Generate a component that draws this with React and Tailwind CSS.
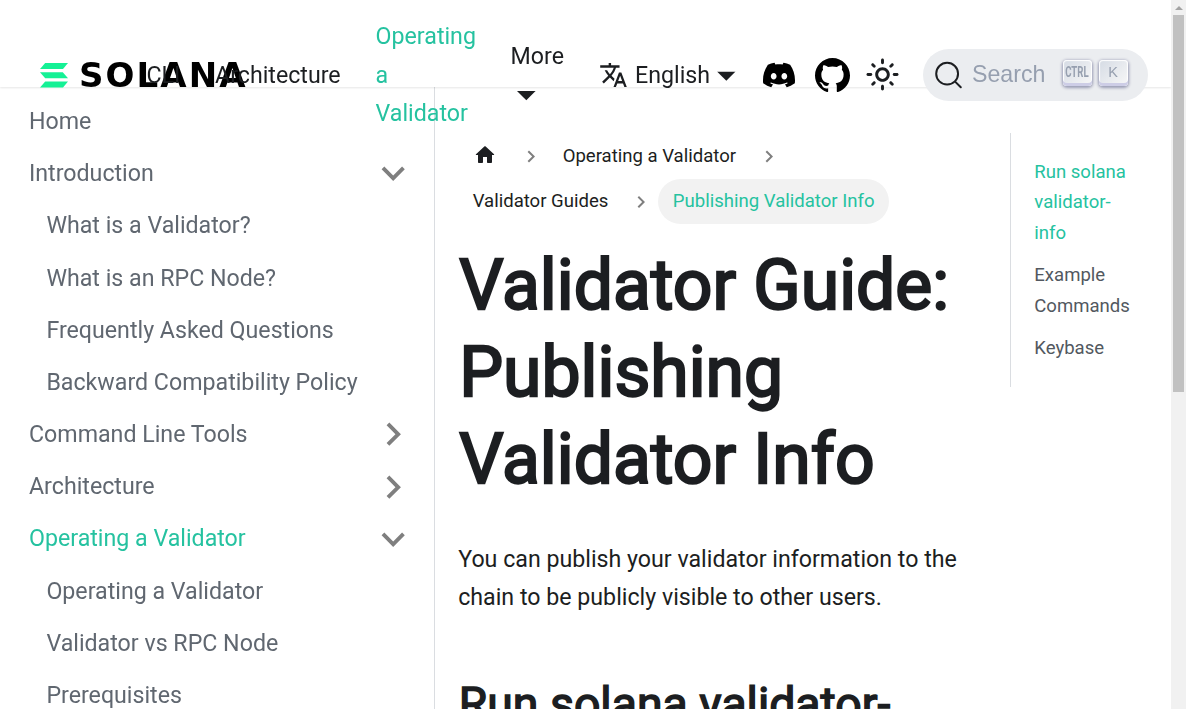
import { SiDiscord, SiGithub } from "react-icons/si";

const sidebar = [
  { label: "Home" },
  { label: "Introduction", state: "open" },
  { label: "What is a Validator?", nested: true },
  { label: "What is an RPC Node?", nested: true },
  { label: "Frequently Asked Questions", nested: true },
  { label: "Backward Compatibility Policy", nested: true },
  { label: "Command Line Tools", state: "closed" },
  { label: "Architecture", state: "closed" },
  { label: "Operating a Validator", state: "open", active: true },
  { label: "Operating a Validator", nested: true },
  { label: "Validator vs RPC Node", nested: true },
  { label: "Prerequisites", nested: true },
];

function Caret({ className }) {
  return (
    <svg viewBox="0 0 18 9" className={"h-[9.3px] w-[18.6px] " + className} fill="#1c1e21">
      <path d="M0 0h18L9 9z" />
    </svg>
  );
}

function Chevron({ className }) {
  return (
    <svg viewBox="0 0 24 24" className={className}>
      <path fill="#000" fillOpacity="0.5" d="M7.41 15.41 12 10.83l4.59 4.58L18 14l-6-6-6 6z" />
    </svg>
  );
}

function Logo() {
  return (
    <div className="flex h-[26px] w-[107.5px] shrink-0 items-center overflow-visible">
      <svg viewBox="0 0 28 25" className="h-[25px] w-7 shrink-0" fill="#14f195">
        <path d="M5.2 0H28l-5 6H0z" />
        <path d="M0 9.2h22.8l5.2 6H5.2z" />
        <path d="M5.2 18.4H28l-5 6H0z" />
      </svg>
      <span className="ml-[11px] whitespace-nowrap font-['DejaVu_Sans'] text-[34px] font-bold leading-[26px] tracking-[2.1px] text-black">
        SOLANA
      </span>
    </div>
  );
}

function Header() {
  return (
    <header className="relative z-10 h-[87px] shadow-[0_1px_2px_0_rgba(0,0,0,0.1)] will-change-transform">
      <div className="flex h-[150px] items-center pl-10 pr-[23px] text-[23.2px] leading-[38.28px]">
        <Logo />
        <span className="w-[37px] shrink-0 -translate-x-px">CLI</span>
        <span className="ml-[30.5px] w-[125px] shrink-0">Architecture</span>
        <span className="mb-[0.6px] ml-[35.6px] w-[100px] shrink-0 leading-[38.4px] text-[#25c2a0]">
          Operating a Validator
        </span>
        <div className="ml-[35px] w-[54px] shrink-0">
          <div>More</div>
          <div className="flex h-[38px] items-center pl-[6.4px]">
            <Caret className="translate-y-[2px]" />
          </div>
        </div>
        <div className="ml-[34.4px] flex shrink-0 items-center">
          <svg viewBox="0 0 24 24" className="mr-[7px] h-[29px] w-[29px] -translate-y-[0.5px]" fill="#1c1e21">
            <path d="M12.87 15.07l-2.54-2.51.03-.03c1.74-1.94 2.98-4.17 3.71-6.53H17V4h-7V2H8v2H1v1.99h11.17C11.5 7.92 10.44 9.75 9 11.35 8.07 10.32 7.3 9.19 6.69 8h-2c.73 1.63 1.73 3.17 2.98 4.56l-5.09 5.02L4 19l5-5 3.11 3.11.76-2.04zM18.5 10h-2L12 22h2l1.12-3h4.75L21 22h2l-4.5-12zm-2.62 7l1.62-4.33L19.12 17h-3.24z" />
          </svg>
          <span>English</span>
          <Caret className="ml-[7px] translate-y-[1.5px]" />
        </div>
        <SiDiscord className="ml-[27px] h-8 w-8 shrink-0 text-black" />
        <SiGithub className="ml-[20px] h-[35px] w-[35px] shrink-0 -translate-y-[0.5px] text-black" />
        <svg viewBox="0 0 24 24" className="ml-[15px] h-[35px] w-[35px] shrink-0 -translate-y-px" fill="#1c1e21">
          <path d="M12,9c1.65,0,3,1.35,3,3s-1.35,3-3,3s-3-1.35-3-3S10.35,9,12,9 M12,7c-2.76,0-5,2.24-5,5s2.24,5,5,5s5-2.24,5-5 S14.76,7,12,7L12,7z M2,13l2,0c0.55,0,1-0.45,1-1s-0.45-1-1-1l-2,0c-0.55,0-1,0.45-1,1S1.45,13,2,13z M20,13l2,0c0.55,0,1-0.45,1-1 s-0.45-1-1-1l-2,0c-0.55,0-1,0.45-1,1S19.45,13,20,13z M11,2v2c0,0.55,0.45,1,1,1s1-0.45,1-1V2c0-0.55-0.45-1-1-1S11,1.45,11,2z M11,20v2c0,0.55,0.45,1,1,1s1-0.45,1-1v-2c0-0.55-0.45-1-1-1C11.45,19,11,19.45,11,20z M5.99,4.58c-0.39-0.39-1.03-0.39-1.41,0 c-0.39,0.39-0.39,1.03,0,1.41l1.06,1.06c0.39,0.39,1.03,0.39,1.41,0s0.39-1.03,0-1.41L5.99,4.58z M18.36,16.95 c-0.39-0.39-1.03-0.39-1.41,0c-0.39,0.39-0.39,1.03,0,1.41l1.06,1.06c0.39,0.39,1.03,0.39,1.41,0c0.39-0.39,0.39-1.03,0-1.41 L18.36,16.95z M19.42,5.99c0.39-0.39,0.39-1.03,0-1.41c-0.39-0.39-1.03-0.39-1.41,0l-1.06,1.06c-0.39,0.39-0.39,1.03,0,1.41 s1.03,0.39,1.41,0L19.42,5.99z M7.05,18.36c0.39-0.39,0.39-1.03,0-1.41c-0.39-0.39-1.03-0.39-1.41,0l-1.06,1.06 c-0.39,0.39-0.39,1.03,0,1.41s1.03,0.39,1.41,0L7.05,18.36z" />
        </svg>
        <button className="ml-auto flex h-[52px] w-[225px] shrink-0 items-center rounded-full bg-[#ebedf0] pl-[10.6px] font-['Liberation_Sans',sans-serif]">
          <svg viewBox="0 0 20 20" className="h-[29px] w-[29px] -translate-y-[0.5px] text-[#1c1e21]">
            <path
              d="M14.386 14.386l4.0877 4.0877-4.0877-4.0877c-2.9418 2.9419-7.7115 2.9419-10.6533 0-2.9419-2.9418-2.9419-7.7115 0-10.6533 2.9418-2.9419 7.7115-2.9419 10.6533 0 2.9419 2.9418 2.9419 7.7115 0 10.6533z"
              stroke="currentColor"
              strokeWidth="1.4"
              fill="none"
              strokeLinecap="round"
              strokeLinejoin="round"
            />
          </svg>
          <span className="mb-[2px] ml-[9.4px] w-[84px] text-left text-[#969faf]">Search</span>
          <Key>
            <span className="scale-x-[0.62] font-['Roboto'] text-[15.5px] font-bold">CTRL</span>
          </Key>
          <Key>
            <span className="text-[14.5px]">K</span>
          </Key>
        </button>
      </div>
    </header>
  );
}

function Key({ children }) {
  return (
    <span className="mb-[4px] ml-[6.8px] flex h-[26px] w-[29px] shrink-0 items-center justify-center rounded-[4px] bg-[linear-gradient(-225deg,#d5dbe4,#f8f8f8)] pb-px leading-none text-[#969faf] shadow-[inset_0_-3px_0_0_#cdcde6,inset_0_0_1px_1px_#fff,0_1px_3px_1px_rgba(30,35,90,0.4)]">
      {children}
    </span>
  );
}

function Sidebar() {
  return (
    <aside className="w-[435px] shrink-0 border-r border-[#dadde1] pl-[11.6px] pt-[11.3px] will-change-transform">
      <ul className="flex flex-col gap-[5.8px]">
        {sidebar.map((item, i) => (
          <li
            key={i}
            className={
              "flex h-[46.4px] items-center justify-between pr-[17.4px] text-[23.2px] leading-[29px] " +
              (item.nested ? "pl-[34.8px] " : "pl-[17.4px] ") +
              (item.active ? "text-[#25c2a0]" : "text-[#606770]")
            }
          >
            <span>{item.label}</span>
            {item.state && (
              <Chevron className={"h-[46.4px] w-[46.4px] " + (item.state === "open" ? "rotate-180" : "rotate-90")} />
            )}
          </li>
        ))}
      </ul>
    </aside>
  );
}

function Article() {
  return (
    <article className="w-[552px] shrink-0 pl-[23.2px] pt-[47px]">
      <nav className="flex flex-wrap items-center text-[18.56px] leading-[30.6px]">
        <div className="flex h-[45px] w-full items-center">
          <svg viewBox="0 0 24 24" className="mr-[0.5px] ml-[15px] h-6 w-6 shrink-0 -translate-y-[2px]" fill="#1c1e21">
            <path d="M10 19v-5h4v5c0 .55.45 1 1 1h3c.55 0 1-.45 1-1v-7h1.7c.46 0 .68-.57.33-.87L12.67 3.6c-.38-.34-.96-.34-1.34 0l-8.36 7.53c-.34.3-.13.87.33.87H5v7c0 .55.45 1 1 1h3c.55 0 1-.45 1-1z" />
          </svg>
          <Chevron className="ml-[21px] h-[24px] w-[24px] -translate-y-[0.5px] rotate-90" />
          <span className="ml-[20px]">Operating a Validator</span>
          <Chevron className="ml-[20.5px] h-[24px] w-[24px] -translate-y-[0.5px] rotate-90" />
        </div>
        <div className="flex h-[45px] w-full items-center">
          <span className="ml-[14.5px]">Validator Guides</span>
          <Chevron className="ml-[20.5px] h-[24px] w-[24px] rotate-90" />
          <span className="ml-[5.5px] flex h-[45px] items-center rounded-full bg-[#f2f2f2] px-[14.5px] text-[#25c2a0]">
            Publishing Validator Info
          </span>
        </div>
      </nav>
      <h1 className="mt-[17.6px] translate-x-px text-[69.6px] leading-[87px] [-webkit-text-stroke:2.3px_#1c1e21]">
        Validator Guide:
        <br />
        Publishing
        <br />
        Validator Info
      </h1>
      <p className="mt-[37.4px] whitespace-nowrap text-[23.2px] leading-[38.28px]">
        You can publish your validator information to the
        <br />
        chain to be publicly visible to other users.
      </p>
      <h2 className="mt-[58px] translate-x-[0.5px] whitespace-nowrap text-[46.4px] leading-[58px] [-webkit-text-stroke:1.5px_#1c1e21]">
        Run solana validator-
        <br />
        info
      </h2>
    </article>
  );
}

function Contents() {
  return (
    <div className="ml-[23px] mt-[46px] h-[254px] w-[150px] border-l border-[#dadde1] pl-[23.3px] pt-[23.7px] text-[18.56px] leading-[30.62px] text-[#525860]">
      <div className="text-[#25c2a0]">
        Run solana
        <br />
        validator-
        <br />
        info
      </div>
      <div className="mt-[11.6px]">
        Example
        <br />
        Commands
      </div>
      <div className="mt-[11.6px]">Keybase</div>
    </div>
  );
}

function Scrollbar() {
  return (
    <div className="w-[15px] shrink-0 bg-[#f1f1f1]">
      <div className="flex h-[15px] items-center justify-center">
        <svg viewBox="0 0 8 4" className="h-1 w-2" fill="#a3a3a3">
          <path d="M4 0l4 4H0z" />
        </svg>
      </div>
      <div className="ml-[2px] h-[377px] w-[11px] bg-[#c1c1c1]" />
    </div>
  );
}

export default function App() {
  return (
    <div className="flex h-[709px] w-[1186px] overflow-hidden bg-white font-['Roboto',sans-serif] text-[#1c1e21]">
      <div className="h-full w-[1171px] shrink-0 overflow-hidden">
        <Header />
        <div className="flex h-[900px]">
          <Sidebar />
          <Article />
          <Contents />
        </div>
      </div>
      <Scrollbar />
    </div>
  );
}
